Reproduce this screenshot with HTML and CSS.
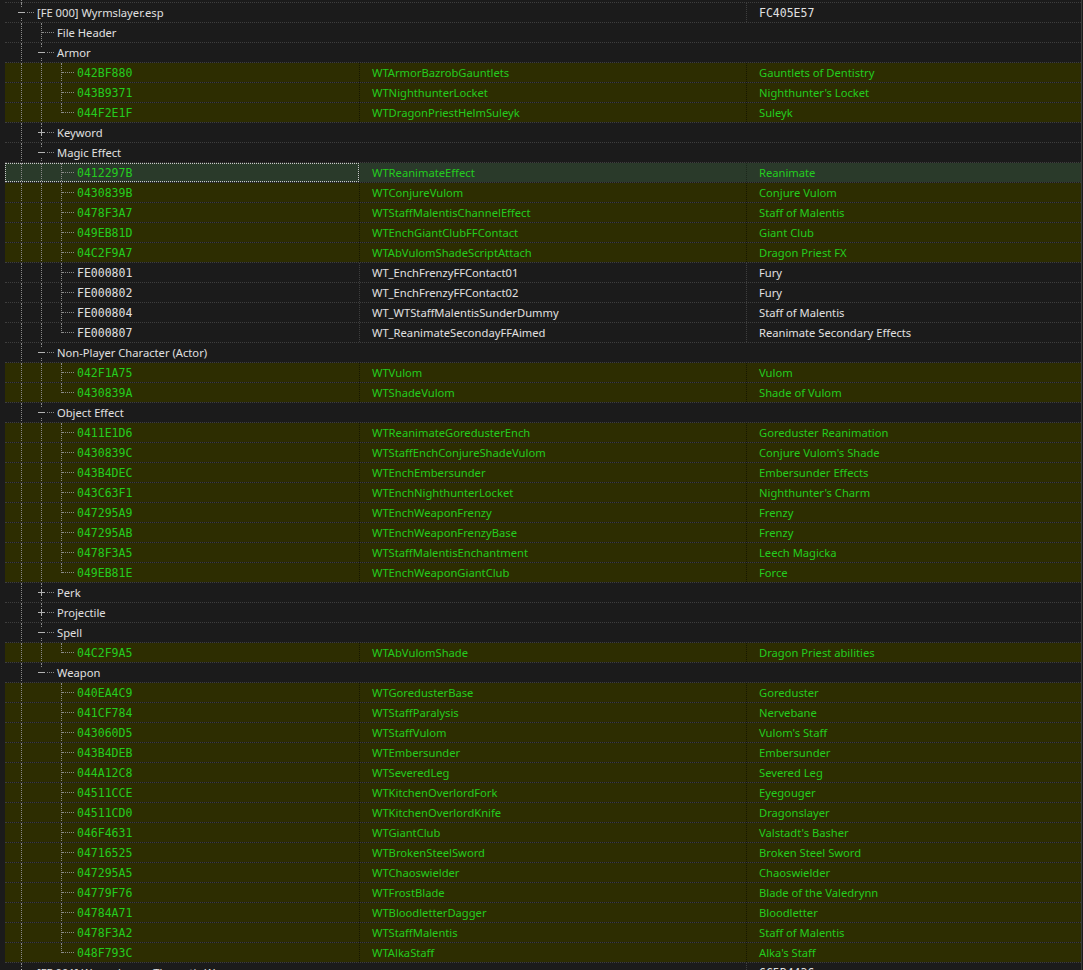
FILE: index.html
```html
<!DOCTYPE html>
<html>
<head>
<meta charset="utf-8">
<link rel="stylesheet" href="styles.css">
</head>
<body>
<div class="tree">
  <div class="row top"><div class="c1"><span class="g pipe"></span></div></div>

  <div class="row lvl0"><div class="c1"><span class="g tee"><i class="tg"></i></span><span class="t">[FE 000] Wyrmslayer.esp</span></div><div class="c2 nosep"></div><div class="c3 mono">FC405E57</div></div>

  <div class="row grp"><div class="c1"><span class="g pipe"></span><span class="g tee"></span><span class="t">File Header</span></div></div>
  <div class="row grp"><div class="c1"><span class="g pipe"></span><span class="g tee"><i class="tg"></i></span><span class="t">Armor</span></div></div>
  <div class="row rec"><div class="c1"><span class="g pipe"></span><span class="g pipe"></span><span class="g tee"></span><span class="id">042BF880</span></div><div class="c2">WTArmorBazrobGauntlets</div><div class="c3">Gauntlets of Dentistry</div></div>
  <div class="row rec"><div class="c1"><span class="g pipe"></span><span class="g pipe"></span><span class="g tee"></span><span class="id">043B9371</span></div><div class="c2">WTNighthunterLocket</div><div class="c3">Nighthunter's Locket</div></div>
  <div class="row rec"><div class="c1"><span class="g pipe"></span><span class="g pipe"></span><span class="g elbow"></span><span class="id">044F2E1F</span></div><div class="c2">WTDragonPriestHelmSuleyk</div><div class="c3">Suleyk</div></div>
  <div class="row grp"><div class="c1"><span class="g pipe"></span><span class="g tee"><i class="tg plus"></i></span><span class="t">Keyword</span></div></div>
  <div class="row grp"><div class="c1"><span class="g pipe"></span><span class="g tee"><i class="tg"></i></span><span class="t">Magic Effect</span></div></div>
  <div class="row rec sel"><div class="c1 focus"><span class="g pipe"></span><span class="g pipe"></span><span class="g tee"></span><span class="id">0412297B</span></div><div class="c2">WTReanimateEffect</div><div class="c3">Reanimate</div></div>
  <div class="row rec"><div class="c1"><span class="g pipe"></span><span class="g pipe"></span><span class="g tee"></span><span class="id">0430839B</span></div><div class="c2">WTConjureVulom</div><div class="c3">Conjure Vulom</div></div>
  <div class="row rec"><div class="c1"><span class="g pipe"></span><span class="g pipe"></span><span class="g tee"></span><span class="id">0478F3A7</span></div><div class="c2">WTStaffMalentisChannelEffect</div><div class="c3">Staff of Malentis</div></div>
  <div class="row rec"><div class="c1"><span class="g pipe"></span><span class="g pipe"></span><span class="g tee"></span><span class="id">049EB81D</span></div><div class="c2">WTEnchGiantClubFFContact</div><div class="c3">Giant Club</div></div>
  <div class="row rec"><div class="c1"><span class="g pipe"></span><span class="g pipe"></span><span class="g tee"></span><span class="id">04C2F9A7</span></div><div class="c2">WTAbVulomShadeScriptAttach</div><div class="c3">Dragon Priest FX</div></div>
  <div class="row new"><div class="c1"><span class="g pipe"></span><span class="g pipe"></span><span class="g tee"></span><span class="id">FE000801</span></div><div class="c2">WT_EnchFrenzyFFContact01</div><div class="c3">Fury</div></div>
  <div class="row new"><div class="c1"><span class="g pipe"></span><span class="g pipe"></span><span class="g tee"></span><span class="id">FE000802</span></div><div class="c2">WT_EnchFrenzyFFContact02</div><div class="c3">Fury</div></div>
  <div class="row new"><div class="c1"><span class="g pipe"></span><span class="g pipe"></span><span class="g tee"></span><span class="id">FE000804</span></div><div class="c2">WT_WTStaffMalentisSunderDummy</div><div class="c3">Staff of Malentis</div></div>
  <div class="row new"><div class="c1"><span class="g pipe"></span><span class="g pipe"></span><span class="g elbow"></span><span class="id">FE000807</span></div><div class="c2">WT_ReanimateSecondayFFAimed</div><div class="c3">Reanimate Secondary Effects</div></div>
  <div class="row grp"><div class="c1"><span class="g pipe"></span><span class="g tee"><i class="tg"></i></span><span class="t">Non-Player Character (Actor)</span></div></div>
  <div class="row rec"><div class="c1"><span class="g pipe"></span><span class="g pipe"></span><span class="g tee"></span><span class="id">042F1A75</span></div><div class="c2">WTVulom</div><div class="c3">Vulom</div></div>
  <div class="row rec"><div class="c1"><span class="g pipe"></span><span class="g pipe"></span><span class="g elbow"></span><span class="id">0430839A</span></div><div class="c2">WTShadeVulom</div><div class="c3">Shade of Vulom</div></div>
  <div class="row grp"><div class="c1"><span class="g pipe"></span><span class="g tee"><i class="tg"></i></span><span class="t">Object Effect</span></div></div>
  <div class="row rec"><div class="c1"><span class="g pipe"></span><span class="g pipe"></span><span class="g tee"></span><span class="id">0411E1D6</span></div><div class="c2">WTReanimateGoredusterEnch</div><div class="c3">Goreduster Reanimation</div></div>
  <div class="row rec"><div class="c1"><span class="g pipe"></span><span class="g pipe"></span><span class="g tee"></span><span class="id">0430839C</span></div><div class="c2">WTStaffEnchConjureShadeVulom</div><div class="c3">Conjure Vulom's Shade</div></div>
  <div class="row rec"><div class="c1"><span class="g pipe"></span><span class="g pipe"></span><span class="g tee"></span><span class="id">043B4DEC</span></div><div class="c2">WTEnchEmbersunder</div><div class="c3">Embersunder Effects</div></div>
  <div class="row rec"><div class="c1"><span class="g pipe"></span><span class="g pipe"></span><span class="g tee"></span><span class="id">043C63F1</span></div><div class="c2">WTEnchNighthunterLocket</div><div class="c3">Nighthunter's Charm</div></div>
  <div class="row rec"><div class="c1"><span class="g pipe"></span><span class="g pipe"></span><span class="g tee"></span><span class="id">047295A9</span></div><div class="c2">WTEnchWeaponFrenzy</div><div class="c3">Frenzy</div></div>
  <div class="row rec"><div class="c1"><span class="g pipe"></span><span class="g pipe"></span><span class="g tee"></span><span class="id">047295AB</span></div><div class="c2">WTEnchWeaponFrenzyBase</div><div class="c3">Frenzy</div></div>
  <div class="row rec"><div class="c1"><span class="g pipe"></span><span class="g pipe"></span><span class="g tee"></span><span class="id">0478F3A5</span></div><div class="c2">WTStaffMalentisEnchantment</div><div class="c3">Leech Magicka</div></div>
  <div class="row rec"><div class="c1"><span class="g pipe"></span><span class="g pipe"></span><span class="g elbow"></span><span class="id">049EB81E</span></div><div class="c2">WTEnchWeaponGiantClub</div><div class="c3">Force</div></div>
  <div class="row grp"><div class="c1"><span class="g pipe"></span><span class="g tee"><i class="tg plus"></i></span><span class="t">Perk</span></div></div>
  <div class="row grp"><div class="c1"><span class="g pipe"></span><span class="g tee"><i class="tg plus"></i></span><span class="t">Projectile</span></div></div>
  <div class="row grp"><div class="c1"><span class="g pipe"></span><span class="g tee"><i class="tg"></i></span><span class="t">Spell</span></div></div>
  <div class="row rec"><div class="c1"><span class="g pipe"></span><span class="g pipe"></span><span class="g elbow"></span><span class="id">04C2F9A5</span></div><div class="c2">WTAbVulomShade</div><div class="c3">Dragon Priest abilities</div></div>
  <div class="row grp"><div class="c1"><span class="g pipe"></span><span class="g elbow"><i class="tg"></i></span><span class="t">Weapon</span></div></div>
  <div class="row rec"><div class="c1"><span class="g pipe"></span><span class="g"></span><span class="g tee"></span><span class="id">040EA4C9</span></div><div class="c2">WTGoredusterBase</div><div class="c3">Goreduster</div></div>
  <div class="row rec"><div class="c1"><span class="g pipe"></span><span class="g"></span><span class="g tee"></span><span class="id">041CF784</span></div><div class="c2">WTStaffParalysis</div><div class="c3">Nervebane</div></div>
  <div class="row rec"><div class="c1"><span class="g pipe"></span><span class="g"></span><span class="g tee"></span><span class="id">043060D5</span></div><div class="c2">WTStaffVulom</div><div class="c3">Vulom's Staff</div></div>
  <div class="row rec"><div class="c1"><span class="g pipe"></span><span class="g"></span><span class="g tee"></span><span class="id">043B4DEB</span></div><div class="c2">WTEmbersunder</div><div class="c3">Embersunder</div></div>
  <div class="row rec"><div class="c1"><span class="g pipe"></span><span class="g"></span><span class="g tee"></span><span class="id">044A12C8</span></div><div class="c2">WTSeveredLeg</div><div class="c3">Severed Leg</div></div>
  <div class="row rec"><div class="c1"><span class="g pipe"></span><span class="g"></span><span class="g tee"></span><span class="id">04511CCE</span></div><div class="c2">WTKitchenOverlordFork</div><div class="c3">Eyegouger</div></div>
  <div class="row rec"><div class="c1"><span class="g pipe"></span><span class="g"></span><span class="g tee"></span><span class="id">04511CD0</span></div><div class="c2">WTKitchenOverlordKnife</div><div class="c3">Dragonslayer</div></div>
  <div class="row rec"><div class="c1"><span class="g pipe"></span><span class="g"></span><span class="g tee"></span><span class="id">046F4631</span></div><div class="c2">WTGiantClub</div><div class="c3">Valstadt's Basher</div></div>
  <div class="row rec"><div class="c1"><span class="g pipe"></span><span class="g"></span><span class="g tee"></span><span class="id">04716525</span></div><div class="c2">WTBrokenSteelSword</div><div class="c3">Broken Steel Sword</div></div>
  <div class="row rec"><div class="c1"><span class="g pipe"></span><span class="g"></span><span class="g tee"></span><span class="id">047295A5</span></div><div class="c2">WTChaoswielder</div><div class="c3">Chaoswielder</div></div>
  <div class="row rec"><div class="c1"><span class="g pipe"></span><span class="g"></span><span class="g tee"></span><span class="id">04779F76</span></div><div class="c2">WTFrostBlade</div><div class="c3">Blade of the Valedrynn</div></div>
  <div class="row rec"><div class="c1"><span class="g pipe"></span><span class="g"></span><span class="g tee"></span><span class="id">04784A71</span></div><div class="c2">WTBloodletterDagger</div><div class="c3">Bloodletter</div></div>
  <div class="row rec"><div class="c1"><span class="g pipe"></span><span class="g"></span><span class="g tee"></span><span class="id">0478F3A2</span></div><div class="c2">WTStaffMalentis</div><div class="c3">Staff of Malentis</div></div>
  <div class="row rec"><div class="c1"><span class="g pipe"></span><span class="g"></span><span class="g elbow"></span><span class="id">048F793C</span></div><div class="c2">WTAlkaStaff</div><div class="c3">Alka's Staff</div></div>

  <div class="row lvl0"><div class="c1"><span class="g tee"><i class="tg plus"></i></span><span class="t">[FE 001] Wyrmslayer - Thematic Weapons.esp</span></div><div class="c2 nosep"></div><div class="c3 mono">6C5B4436</div></div>
</div>
</body>
</html>
```

FILE: styles.css
```css
html, body {
  margin: 0;
  padding: 0;
  background: #1b1b1b;
  height: 100%;
  overflow: hidden;
}

.tree {
  margin-left: 5px;
  width: 1076px;
  border-right: 1px solid #3b3b3b;
  min-height: 100%;
  font-family: "Segoe UI", "Noto Sans", "Open Sans", sans-serif;
  font-size: 11.2px;
  color: #e0e0e0;
}

.row {
  --bg: #1b1b1b;
  display: flex;
  height: 20px;
  box-sizing: border-box;
  border-bottom: 1px dotted #3e3e3e;
  background: var(--bg);
  background-clip: padding-box;
  line-height: 19px;
  white-space: nowrap;
}

.row.top {
  height: 3px;
}

.row.rec {
  --bg: #2d2d01;
  color: #24cc1f;
}

.row.sel {
  --bg: #2a3a2a;
}

.c1 {
  width: 354px;
  flex: none;
  display: flex;
  align-items: stretch;
  padding-left: 6px;
  box-sizing: border-box;
  overflow: hidden;
  position: relative;
}

.row.grp .c1 {
  width: auto;
  flex: 1;
}

.row.top .c1 {
  overflow: visible;
}

.c1.focus {
  outline: 1px dotted #c8c8c8;
  outline-offset: -1px;
}

.c2 {
  width: 387px;
  flex: none;
  box-sizing: border-box;
  border-left: 1px dotted #3e3e3e;
  padding-left: 12px;
  overflow: hidden;
}

.c3 {
  flex: 1;
  box-sizing: border-box;
  border-left: 1px dotted #3e3e3e;
  padding-left: 12px;
  overflow: hidden;
}

.row.rec .c2, .row.rec .c3 {
  border-left-color: #161600;
}

.row.sel .c2, .row.sel .c3 {
  border-left-color: #1b261b;
}

.c2.nosep {
  border-left-color: transparent;
}

.mono, .id {
  font-family: "DejaVu Sans Mono", "Liberation Mono", monospace;
  font-size: 11.5px;
}

.mono {
  padding-top: 1px;
  box-sizing: border-box;
}

.id {
  margin-left: 6px;
  padding-top: 1px;
}

.t {
  margin-left: 6px;
}

/* tree guides */
.g {
  width: 20px;
  flex: none;
  position: relative;
}

.g.pipe::before,
.g.tee::before,
.g.elbow::before {
  content: "";
  position: absolute;
  left: 10px;
  top: 0;
  bottom: -1px;
  border-left: 1px dotted #8a8a8a;
}

.g.elbow::before {
  bottom: auto;
  height: 10px;
}

.g.tee::after,
.g.elbow::after {
  content: "";
  position: absolute;
  left: 11px;
  top: 9px;
  width: 12px;
  border-top: 1px dotted #8a8a8a;
}

.tg {
  position: absolute;
  left: 6px;
  top: 5px;
  width: 9px;
  height: 9px;
  background: var(--bg);
  z-index: 1;
}

.tg::before {
  content: "";
  position: absolute;
  left: 1px;
  top: 4px;
  width: 7px;
  height: 1px;
  background: #b4b4b4;
}

.tg.plus::after {
  content: "";
  position: absolute;
  left: 4px;
  top: 1px;
  width: 1px;
  height: 7px;
  background: #b4b4b4;
}
```
